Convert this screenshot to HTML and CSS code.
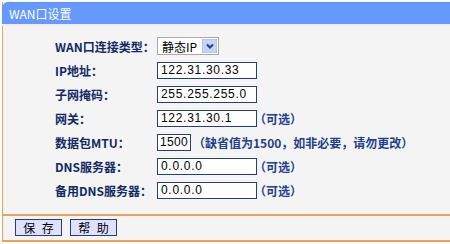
FILE: index.html
```html
<!DOCTYPE html>
<html lang="zh-CN">
<head>
    <meta charset="UTF-8">
    <title>WAN口设置</title>
    <link rel="stylesheet" href="styles.css">
</head>
<body>
    <div class="panel">
        <div class="panel-title">WAN口设置</div>

        <div class="form">
            <div class="row">
                <span class="label">WAN口连接类型：</span>
                <div class="select">
                    <span class="select-text">静态IP</span>
                    <span class="select-btn">
                        <svg viewBox="0 0 10 10" width="10" height="10">
                            <path d="M2 3.5 L5 6.5 L8 3.5" fill="none" stroke="#1d3f8f" stroke-width="2"/>
                        </svg>
                    </span>
                </div>
            </div>
            <div class="row">
                <span class="label">IP地址：</span>
                <input class="input" type="text" value="122.31.30.33">
            </div>
            <div class="row">
                <span class="label">子网掩码：</span>
                <input class="input" type="text" value="255.255.255.0">
            </div>
            <div class="row">
                <span class="label">网关：</span>
                <input class="input" type="text" value="122.31.30.1">
                <span class="hint">（可选）</span>
            </div>
            <div class="row">
                <span class="label">数据包MTU：</span>
                <input class="input input-short" type="text" value="1500">
                <span class="hint hint-wide">（缺省值为1500，如非必要，请勿更改）</span>
            </div>
            <div class="row">
                <span class="label">DNS服务器：</span>
                <input class="input" type="text" value="0.0.0.0">
                <span class="hint">（可选）</span>
            </div>
            <div class="row">
                <span class="label">备用DNS服务器：</span>
                <input class="input" type="text" value="0.0.0.0">
                <span class="hint">（可选）</span>
            </div>
        </div>

        <div class="actions">
            <button class="btn" type="button">保 存</button>
            <button class="btn" type="button">帮 助</button>
        </div>
    </div>
</body>
</html>
```

FILE: styles.css
```css
* { margin: 0; padding: 0; box-sizing: border-box; }
body {
    font-family: "Noto Sans CJK SC", "Liberation Sans", sans-serif;
    font-size: 12px;
    background: #ffffff;
    width: 450px;
    height: 244px;
    overflow: hidden;
}
.panel {
    margin: 2px 0 0 2px;
    background: #f4f4f4;
    border-left: 1px solid #e9a35c;
    border-bottom: 2px solid #e9a35c;
    height: 240px;
}
.panel-title {
    height: 24px;
    margin-left: -1px;
    background: #6699ff;
    border-top: 1px solid #5b8ff0;
    border-bottom: 2px solid #f6ecf6;
    border-radius: 6px 0 0 0;
    color: #ffffff;
    font-size: 12px;
    line-height: 21px;
    padding-left: 7px;
}
.form {
    padding: 8px 0 12px 52px;
    border-bottom: 2px solid #e9a35c;
}
.row {
    display: flex;
    align-items: center;
    height: 24px;
}
.label {
    width: 102px;
    color: #112a66;
    font-weight: bold;
    font-size: 12px;
}
.input {
    width: 100px;
    height: 17px;
    border: 1px solid #23407a;
    background: #ffffff;
    font-family: "Liberation Sans", sans-serif;
    font-size: 12px;
    letter-spacing: 0.7px;
    color: #000000;
    padding: 0 2px 0 3px;
    outline: none;
}
.input-short {
    width: 34px;
    padding: 0 1px 0 2px;
    letter-spacing: 0.3px;
}
.hint {
    color: #1d3f8f;
    font-weight: bold;
    font-size: 12px;
    margin-left: -3px;
}
.hint-wide {
    margin-left: 2px;
}
.select {
    display: flex;
    align-items: center;
    width: 62px;
    height: 18px;
    border: 1px solid #a9a9a9;
    background: #ffffff;
}
.select-text {
    flex: 1;
    padding-left: 4px;
    color: #000000;
    font-size: 12px;
}
.select-btn {
    display: flex;
    align-items: center;
    justify-content: center;
    width: 15px;
    height: 14px;
    margin-right: 1px;
    background: #c4d4f6;
    border: 1px solid #b3c6ee;
}
.actions {
    display: flex;
    gap: 8px;
    padding: 3px 0 0 12px;
    height: 24px;
}
.btn {
    width: 47px;
    height: 17px;
    background: #dfe1ff;
    border: 1px solid #23407a;
    font-family: "Noto Sans CJK SC", sans-serif;
    font-size: 12px;
    line-height: 15px;
    letter-spacing: 2px;
    text-indent: 2px;
    color: #000000;
}
```
